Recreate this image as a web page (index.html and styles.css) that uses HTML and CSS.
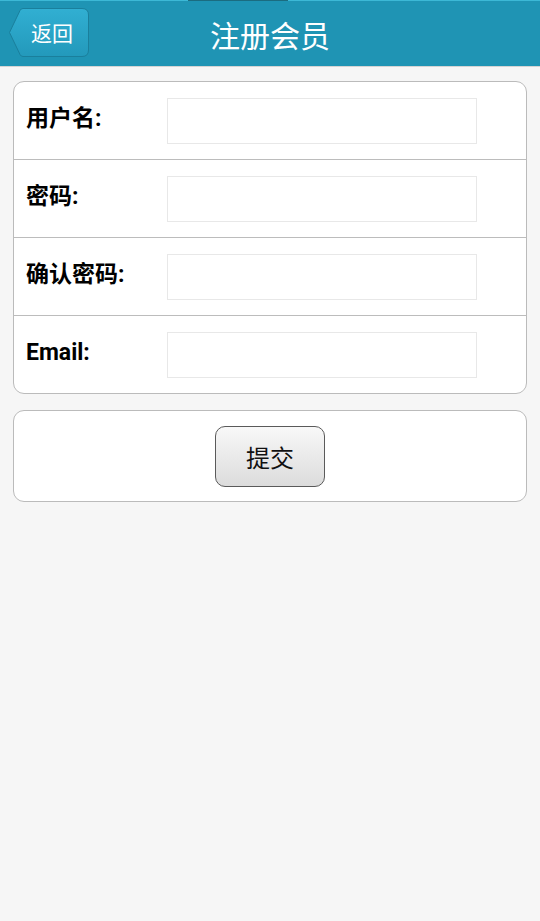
FILE: index.html
```html
<!DOCTYPE html>
<html lang="zh">
<head>
<meta charset="utf-8">
<title>注册会员</title>
<link rel="stylesheet" href="styles.css">
</head>
<body>
<header class="bar">
  <a class="back" href="#">
    <svg class="back-bg" width="82" height="51" viewBox="0 0 82 51" aria-hidden="true">
      <defs>
        <linearGradient id="bg" x1="0" y1="0" x2="0" y2="1">
          <stop offset="0" stop-color="#31afd2"/>
          <stop offset="1" stop-color="#2399bb"/>
        </linearGradient>
      </defs>
      <path d="M15 1.5 H74 Q80.5 1.5 80.5 8 V43 Q80.5 49.5 74 49.5 H15 Q13 49.5 12 47.5 L1.5 25.5 L12 3.5 Q13 1.5 15 1.5 Z" fill="url(#bg)" stroke="#1a7f9c" stroke-width="1"/>
    </svg>
    <span class="back-text">返回</span>
  </a>
  <h1 class="title">注册会员</h1>
  <span></span>
</header>
<main class="content">
  <form class="card form">
    <div class="row">
      <label class="label">用户名:</label>
      <input class="field" type="text">
    </div>
    <div class="row">
      <label class="label">密码:</label>
      <input class="field" type="password">
    </div>
    <div class="row">
      <label class="label">确认密码:</label>
      <input class="field" type="password">
    </div>
    <div class="row">
      <label class="label">Email:</label>
      <input class="field" type="email">
    </div>
  </form>
  <div class="card actions">
    <button class="submit" type="button">提交</button>
  </div>
</main>
</body>
</html>
```
FILE: styles.css
```css
html, body {
  margin: 0;
  padding: 0;
  background: #f6f6f6;
  font-family: Roboto, "Noto Sans CJK SC", sans-serif;
}
.bar {
  position: relative;
  height: 65px;
  background: #1f94b4;
  border-top: 1px solid #3cb8d6;
  border-bottom: 1px solid #d4d4d4;
  display: grid;
  grid-template-columns: 1fr auto 1fr;
  align-items: center;
}
.bar::before {
  content: "";
  position: absolute;
  top: -1px;
  left: 188px;
  width: 100px;
  height: 1px;
  background: #1b6c80;
}
.back {
  position: relative;
  margin-left: 8px;
  width: 82px;
  height: 51px;
  text-decoration: none;
  display: flex;
  align-items: center;
  margin-top: -2px;
}
.back-bg {
  position: absolute;
  left: 0;
  top: 0;
}
.back-text {
  position: relative;
  padding-left: 23px;
  color: #fff;
  font-size: 21px;
  font-family: "Noto Sans CJK SC", sans-serif;
  line-height: 1;
}
.title {
  margin: 0;
  color: #fff;
  font-weight: normal;
  font-size: 30px;
  font-family: "Noto Sans CJK SC", sans-serif;
  line-height: 1;
}
.content {
  padding: 14px 13px;
  display: flex;
  flex-direction: column;
  gap: 16px;
}
.card {
  background: #fff;
  border: 1px solid #bbb;
  border-radius: 11px;
  margin: 0;
}
.row {
  height: 77px;
  display: flex;
  align-items: center;
  border-top: 1px solid #bcbcbc;
  padding-left: 12px;
}
.row:first-child {
  border-top: none;
}
.label {
  width: 141px;
  font-weight: bold;
  font-size: 23px;
  line-height: 1;
  padding-bottom: 5px;
  color: #000;
  font-family: Roboto, "Noto Sans CJK SC", sans-serif;
}
.field {
  box-sizing: border-box;
  width: 310px;
  height: 46px;
  border: 1px solid #e8e8e8;
  background: #fff;
  margin: 0;
  padding: 0 8px;
  outline: none;
}
.actions {
  height: 90px;
  display: flex;
  justify-content: center;
  align-items: center;
}
.submit {
  width: 110px;
  height: 61px;
  border: 1px solid #5a5a5a;
  border-radius: 10px;
  background: linear-gradient(#f8f8f8, #dcdcdc);
  font-size: 24px;
  color: #111;
  font-family: "Noto Sans CJK SC", sans-serif;
  padding: 0;
}
```
